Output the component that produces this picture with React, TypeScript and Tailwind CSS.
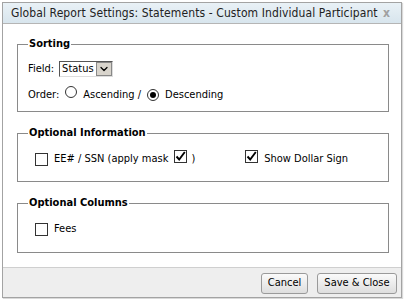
import { ChevronDown } from 'lucide-react';

function Check({ checked }: { checked?: boolean }) {
    return (
        <span className="inline-flex h-[13px] w-[13px] shrink-0 items-center justify-center border border-[#333] bg-white">
            {checked && (
                <svg width="11" height="11" viewBox="0 0 11 11" aria-hidden="true">
                    <path d="M1.5 5.5 L4.2 8.5 L9.8 1" stroke="#000" strokeWidth="1.9" fill="none" />
                </svg>
            )}
        </span>
    );
}

function Radio({ on }: { on?: boolean }) {
    return (
        <span className="inline-flex h-[12px] w-[12px] shrink-0 items-center justify-center rounded-full border border-[#333] bg-white">
            {on && <span className="h-[6px] w-[6px] rounded-full bg-black" />}
        </span>
    );
}

function Group({ title, children, className }: { title: string; children: React.ReactNode; className: string }) {
    return (
        <fieldset className={`border border-[#8a8a8a] pl-[10px] ${className}`}>
            <legend className="px-[1px] text-[11px] font-bold leading-[14px] text-black">{title}</legend>
            {children}
        </fieldset>
    );
}

export default function App() {
    return (
        <div className="h-[299px] w-[404px] bg-white pt-[2px] pl-[2px] font-['DejaVu_Sans_Condensed',sans-serif] text-[11px] text-black">
            <div className="flex w-[400px] flex-col border border-[#a3a3a3] shadow-[1px_1px_1px_rgba(0,0,0,0.15)]">
                <div className="flex h-[21px] items-center justify-between border-b border-[#b5b5b5] bg-gradient-to-b from-[#e9f1f6] to-[#d8e5ed] pl-[8px] pr-[11px]">
                    <span className="text-[12px] tracking-[0.1px] text-[#222]">Global Report Settings: Statements - Custom Individual Participant</span>
                    <span className="text-[12px] font-bold leading-none text-[#a0a0a0]">x</span>
                </div>

                <div className="flex flex-col gap-[14px] bg-white pt-[13px] pr-[12px] pb-[14px] pl-[14px]">
                    <Group title="Sorting" className="pt-[10px] pb-[8px]">
                        <div className="flex h-[16px] items-center gap-[5px]">
                            <span>Field:</span>
                            <span className="flex h-[16px] items-stretch border border-t-[#555] border-l-[#555] border-r-[#ddd] border-b-[#ddd] bg-white">
                                <span className="flex items-center px-[2px]">Status</span>
                                <span className="flex w-[16px] items-center justify-center border border-[#888] bg-[#d8d4cc]">
                                    <ChevronDown className="h-[12px] w-[12px]" strokeWidth={2.5} />
                                </span>
                            </span>
                        </div>
                        <div className="mt-[10px] flex h-[16px] items-center">
                            <span>Order:</span>
                            <span className="ml-[6px]"><Radio /></span>
                            <span className="ml-[6px]">Ascending /</span>
                            <span className="ml-[6px]"><Radio on /></span>
                            <span className="ml-[6px]">Descending</span>
                        </div>
                    </Group>

                    <Group title="Optional Information" className="pt-[11px] pb-[14px]">
                        <div className="flex h-[16px] items-center pl-[7px]">
                            <Check />
                            <span className="ml-[6px]">EE# / SSN (apply mask</span>
                            <span className="ml-[6px]"><Check checked /></span>
                            <span className="ml-[4px]">)</span>
                            <span className="ml-[50px]"><Check checked /></span>
                            <span className="ml-[6px]">Show Dollar Sign</span>
                        </div>
                    </Group>

                    <Group title="Optional Columns" className="pt-[11px] pb-[15px]">
                        <div className="flex h-[16px] items-center pl-[7px]">
                            <Check />
                            <span className="ml-[6px]">Fees</span>
                        </div>
                    </Group>
                </div>

                <div className="flex h-[30px] items-start justify-end gap-[9px] border-t border-[#cfcfcf] bg-[#eeeeee] pt-[5px] pr-[4px]">
                    <button className="h-[21px] w-[47px] rounded-[3px] border border-[#9a9a9a] bg-gradient-to-b from-[#fafafa] to-[#dedede] text-[11px] text-black">Cancel</button>
                    <button className="h-[21px] w-[80px] rounded-[3px] border border-[#9a9a9a] bg-gradient-to-b from-[#fafafa] to-[#dedede] text-[11px] text-black">Save &amp; Close</button>
                </div>
            </div>
        </div>
    );
}
